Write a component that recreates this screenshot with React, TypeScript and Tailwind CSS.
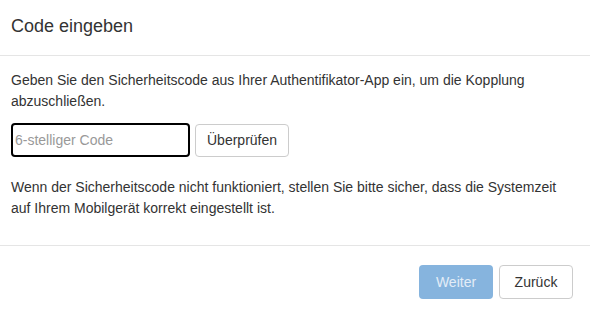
const App = (): JSX.Element => {
  return (
    <div className="w-[590px] h-[316px] bg-white text-[#333] font-['Liberation_Sans',Arial,sans-serif] overflow-hidden">
      <div className="h-[56px] flex items-center px-[11px] border-b border-[#e5e5e5]">
        <h4 className="text-[18px] leading-[22px] -mt-[4px]">Code eingeben</h4>
      </div>

      <div className="px-[11px] pt-[14px] h-[190px] border-b border-[#e5e5e5] text-[14px] leading-[21px]">
        <p>
          Geben Sie den Sicherheitscode aus Ihrer Authentifikator-App ein, um die Kopplung
          abzuschließen.
        </p>
        <div className="flex items-center gap-[5px] mt-[11px]">
          <input
            type="text"
            placeholder="6-stelliger Code"
            className="w-[179px] h-[34px] px-[2px] border-2 border-black rounded-[4px] text-[14px] placeholder:text-[#999] outline-none"
          />
          <button
            type="button"
            className="h-[33px] px-[11px] border border-[#ccc] rounded-[4px] bg-white text-[14px] text-[#333]"
          >
            Überprüfen
          </button>
        </div>
        <p className="mt-[20px]">
          Wenn der Sicherheitscode nicht funktioniert, stellen Sie bitte sicher, dass die Systemzeit
          auf Ihrem Mobilgerät korrekt eingestellt ist.
        </p>
      </div>

      <div className="flex justify-end gap-[6px] pt-[19px] pr-[17px]">
        <button
          type="button"
          disabled
          className="w-[74px] h-[34px] rounded-[4px] bg-[#86b4de] text-[#e3edf7] text-[14px]"
        >
          Weiter
        </button>
        <button
          type="button"
          className="w-[74px] h-[34px] rounded-[4px] border border-[#ccc] bg-white text-[#333] text-[14px]"
        >
          Zurück
        </button>
      </div>
    </div>
  );
};
export default App;
